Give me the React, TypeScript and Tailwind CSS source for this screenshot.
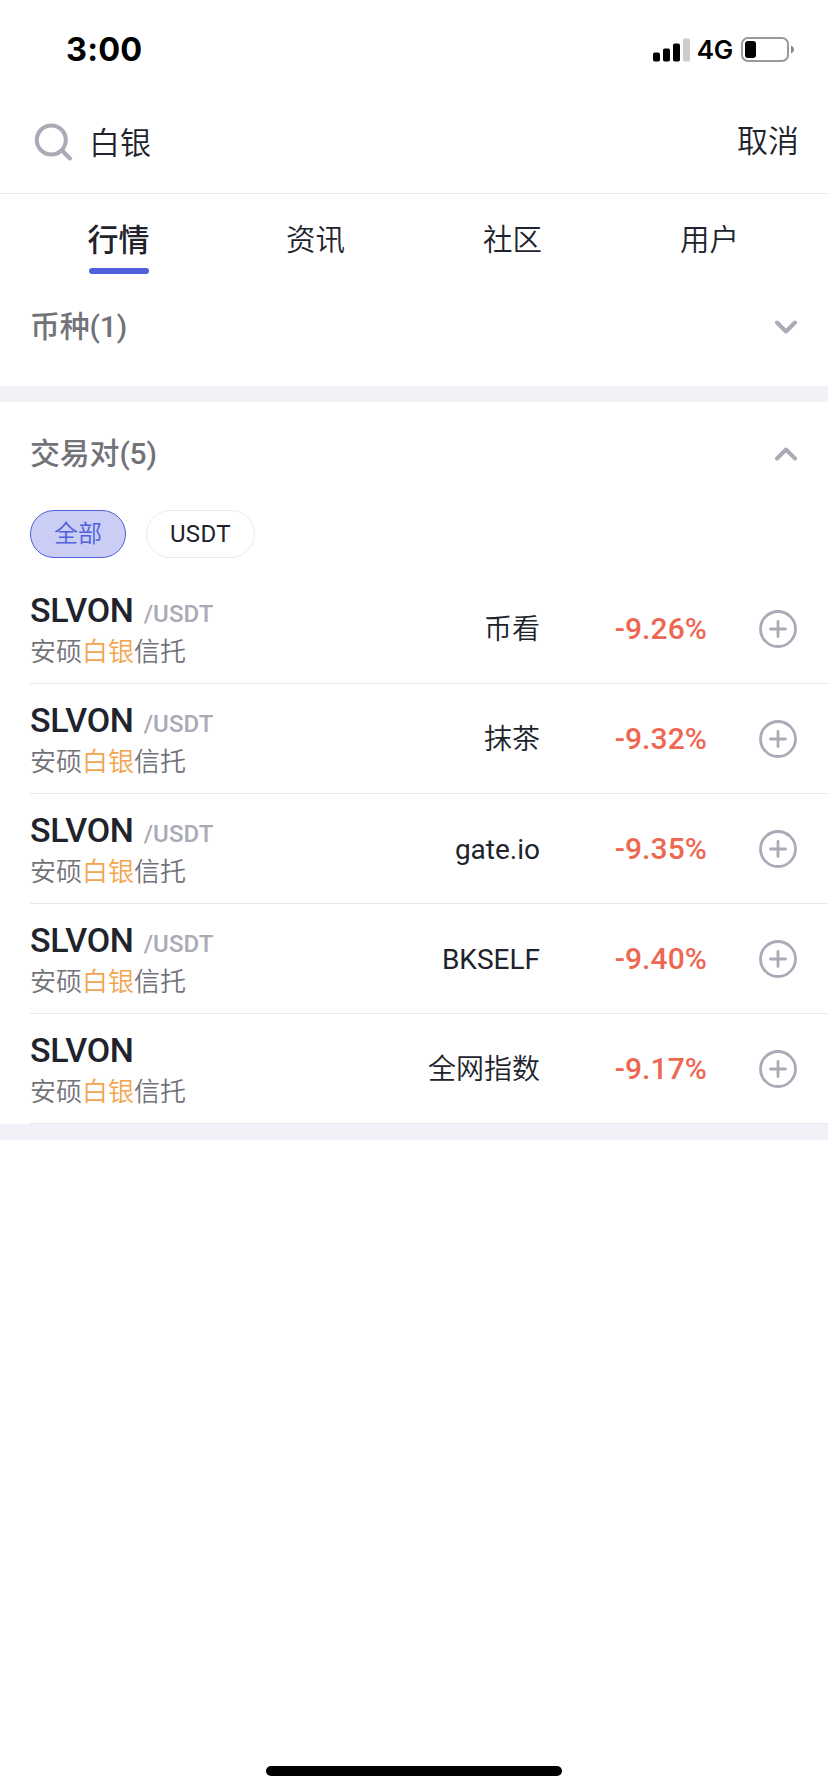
import { useState } from "react";
import clsx from "clsx";

const tabs = ["行情", "资讯", "社区", "用户"];

const filters = ["全部", "USDT"];

const pairs = [
  { id: 1, symbol: "SLVON", quote: "/USDT", exchange: "币看", change: "-9.26%" },
  { id: 2, symbol: "SLVON", quote: "/USDT", exchange: "抹茶", change: "-9.32%" },
  { id: 3, symbol: "SLVON", quote: "/USDT", exchange: "gate.io", change: "-9.35%" },
  { id: 4, symbol: "SLVON", quote: "/USDT", exchange: "BKSELF", change: "-9.40%" },
  { id: 5, symbol: "SLVON", quote: "", exchange: "全网指数", change: "-9.17%" },
];

const isLatin = (text: string) => /^[\w.]+$/.test(text);

function StatusBar() {
  return (
    <div className="flex h-[100px] items-center justify-between pl-[66px] pr-[34px] font-['Inter',sans-serif] text-black">
      <span className="text-[32.5px] leading-none font-bold tracking-[0.2px]">3:00</span>
      <div className="flex items-center">
        <svg width="37" height="24" viewBox="0 0 37 24">
          <rect x="0" y="14.5" width="7" height="9" rx="1.8" />
          <rect x="10" y="10.5" width="7" height="13" rx="1.8" />
          <rect x="20" y="5.5" width="7" height="18" rx="1.8" />
          <rect x="30" y="0.5" width="7" height="23" rx="1.8" fill="#ccc" />
        </svg>
        <span className="ml-[7px] text-[26px] leading-none font-semibold tracking-[-0.3px]">4G</span>
        <svg className="ml-2" width="53" height="26" viewBox="0 0 53 26">
          <rect x="1" y="1" width="46" height="23" rx="6" fill="none" stroke="#999" strokeWidth="2" />
          <rect x="4" y="4" width="11" height="17" rx="3" />
          <path d="M50 8.500c2 .8 3 2.300 3 4s-1 3.200-3 4z" fill="#8a8a8a" />
        </svg>
      </div>
    </div>
  );
}

function Chevron({ open }: { open: boolean }) {
  return (
    <svg width="22" height="14" viewBox="0 0 22 14" fill="none" stroke="#a9abb6" strokeWidth="4" strokeLinecap="round" strokeLinejoin="round">
      <path d={open ? "M2 11.500 11 2.500l9 9" : "M2 2.500l9 9 9-9"} />
    </svg>
  );
}

function SectionTitle({ title, open, className }: { title: string; open: boolean; className?: string }) {
  return (
    <div className={clsx("flex items-center justify-between pl-[30px] pr-[31px] text-[#727379]", className)}>
      <h2 className="text-[30px] leading-[44px] font-medium tracking-[-0.2px]">{title}</h2>
      <Chevron open={open} />
    </div>
  );
}

export default function App() {
  const [tab, setTab] = useState("行情");
  const [filter, setFilter] = useState("全部");

  return (
    <main className="flex h-[1792px] w-[828px] flex-col overflow-hidden bg-white font-['Roboto','Noto_Sans_CJK_SC',sans-serif] text-[#20232c]">
      <StatusBar />

      <header className="flex h-[94px] items-start border-b border-[#e9e9ec] pl-[34px] pr-[29px] pt-[18px]">
        <svg className="mt-[5px]" width="40" height="40" viewBox="0 0 40 40" fill="none" stroke="#a9abb6" strokeWidth="4" strokeLinecap="round">
          <circle cx="17.300" cy="17" r="14.500" />
          <path d="M28 27.500l8 8" />
        </svg>
        <span className="ml-[15px] mt-[3px] text-[31px] leading-[46px] font-[350]">白银</span>
        <button className="ml-auto mt-px text-[31px] leading-[46px] font-[350]">取消</button>
      </header>

      <nav className="flex h-[80px] px-5 pt-6">
        {tabs.map(t => (
          <button key={t} onClick={() => setTab(t)} className="flex flex-1 flex-col items-center">
            <span className={clsx("h-[50px]", t === tab ? "text-[31px] leading-[46px] font-medium" : "text-[29.5px] leading-[44px] font-[350]")}>{t}</span>
            {t === tab && <span className="h-1.5 w-[60px] rounded-full bg-[#505fdb]" />}
          </button>
        ))}
      </nav>

      <section>
        <SectionTitle title="币种(1)" open={false} className="h-[112px] pb-1.5" />
      </section>
      <div className="h-4 bg-[#f1f2f8]" />

      <section>
        <SectionTitle title="交易对(5)" open className="h-[108px] pb-1" />
        <div className="flex h-16 gap-5 pl-[30px]">
          {filters.map(f => (
            <button
              key={f}
              onClick={() => setFilter(f)}
              className={clsx(
                "h-12 rounded-full border px-[23px] text-[24px] leading-[46px]",
                isLatin(f) ? "tracking-[0.3px]" : "font-[350]",
                f === filter ? "border-[#505fdb] bg-[#cacef4] text-[#505fdb]" : "border-[#ebebee]"
              )}
            >
              {f}
            </button>
          ))}
        </div>
        <ul className="pl-[30px]">
          {pairs.map(p => (
            <li key={p.id} className="flex h-[110px] items-center border-b border-[#e9e9ec] pr-[31px]">
              <div className="flex-1 pt-[3px]">
                <div className="flex h-[43px] items-baseline leading-[42px]">
                  <span className="text-[34px] font-medium tracking-[-0.3px]">{p.symbol}</span>
                  <span className="ml-[10px] text-[24px] font-medium tracking-[0.1px] text-[#a9abb6]">{p.quote}</span>
                </div>
                <p className="text-[26px] leading-10 font-[350] text-[#727379]">
                  安硕<span className="text-[#f3a44d]">白银</span>信托
                </p>
              </div>
              <span className={clsx("text-[28px]", isLatin(p.exchange) ? "pt-0.5" : "pt-[3px] font-[350]")}>{p.exchange}</span>
              <span className="w-[167px] text-right text-[30px] font-medium tracking-[0.1px] text-[#ee6752]">{p.change}</span>
              <svg className="ml-[52px]" width="38" height="38" viewBox="0 0 38 38" fill="none" stroke="#a9abb6" strokeWidth="2.800" strokeLinecap="round">
                <circle cx="19" cy="19" r="17.500" />
                <path d="M11.500 19h15M19 11.500v15" />
              </svg>
            </li>
          ))}
        </ul>
      </section>
      <div className="h-4 bg-[#f1f2f8]" />

      <div className="mx-auto mt-auto mb-4 h-2.5 w-[296px] rounded-full bg-black" />
    </main>
  );
}
